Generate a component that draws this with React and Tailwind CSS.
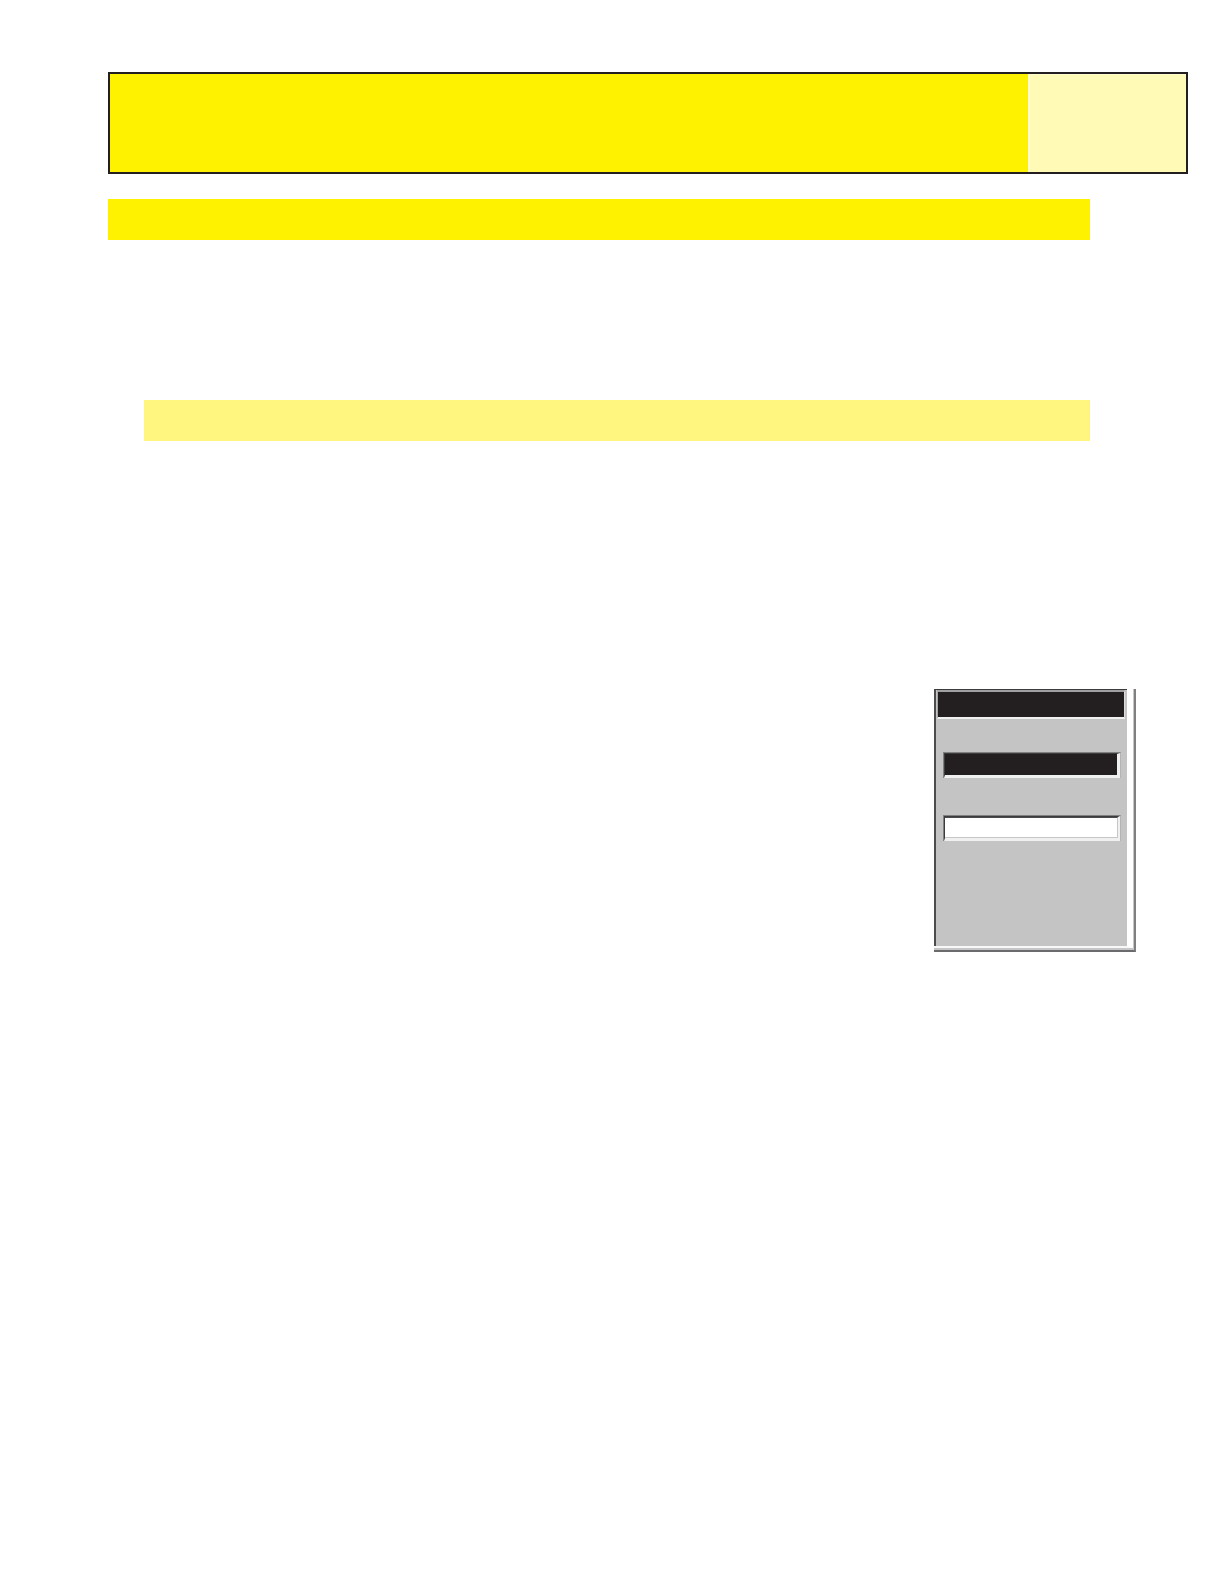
import React from "react";

function ScreenField({ label, dark }) {
  return (
    <div className="h-[26px] border-t border-l border-r border-t-[#808080] border-l-[#808080] border-r-[#b4b4b4]">
      <div
        className={`h-full border-t border-l border-b-3 border-t-[#3c3c3e] border-l-[#3c3c3e] border-b-[#f0f0f0] border-r-[#f0f0f0] ${
          dark ? "border-r-3 bg-[#231f20]" : "border-r-2 bg-white"
        }`}
      >
        <input
          type="text"
          aria-label={label}
          className={`block w-full h-full px-1 text-sm outline-none ${
            dark
              ? "bg-[#231f20] text-white"
              : "bg-white text-black border-t border-b border-r border-t-[#4a4a4c] border-b-[#c6c6c6] border-r-[#c6c6c6]"
          }`}
        />
      </div>
    </div>
  );
}

// Bevelled device screen with a title strip and two fields
function ScreenPanel() {
  return (
    <aside className="w-[202px] border-b-2 border-r-2 border-b-[#6b6b6d] border-r-[#808083]">
      <div className="border-b-2 border-r border-[#c6c6c6]">
        <div className="border-b-2 border-r-6 border-b-[#f8f8f8] border-r-white">
          <div className="h-[257px] border-t border-l-2 border-t-[#3c3c3e] border-l-[#4c4c4e] bg-[#c4c4c4]">
            <div className="h-[29px] ml-px mr-[2px] border-t-2 border-l border-b-2 border-r border-t-[#a0a0a2] border-l-[#a8a8a8] border-b-[#f0f0f0] border-r-[#dcdcdc] bg-[#231f20]" />
            <div className="flex flex-col gap-[37px] pl-[7px] pr-[6px] pt-[33px]">
              <ScreenField label="Selected value" dark />
              <ScreenField label="Value" />
            </div>
          </div>
        </div>
      </div>
    </aside>
  );
}

export default function App() {
  return (
    <main className="min-h-screen bg-white pt-[72px] pl-[108px] pr-[36px] font-['Liberation_Sans',sans-serif]">
      {/* Page header */}
      <header className="flex h-[102px] border-2 border-[#231f20] bg-[#fff200]">
        <div className="flex-1" />
        <div className="w-[158px] border-l-2 border-t border-[#fffcd0] bg-[#fffab5]" />
      </header>

      {/* Section bars */}
      <div className="mr-[98px]">
        <div className="mt-[25px] h-[41px] bg-[#fff200]" />
        <div className="mt-40 ml-9 h-[41px] bg-[#fff67f]" />
      </div>

      <div className="mt-[248px] mr-[52px] flex justify-end">
        <ScreenPanel />
      </div>
    </main>
  );
}
